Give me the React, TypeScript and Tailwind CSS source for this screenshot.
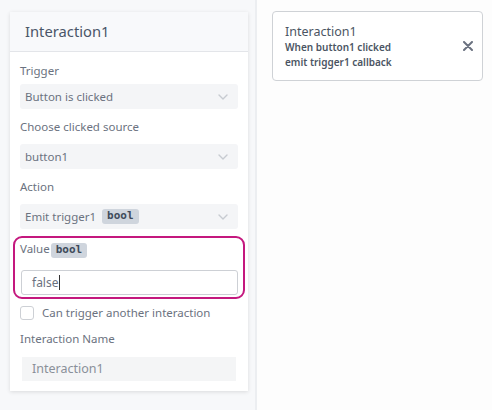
import React from "react";

const font = { fontFamily: '"Noto Sans", "Open Sans", sans-serif' };

function Chevron() {
  return (
    <svg width="10" height="6" viewBox="0 0 10 6" className="shrink-0">
      <path d="M1 1 L5 5 L9 1" fill="none" stroke="#c7cbd1" strokeWidth="1.4" strokeLinecap="round" strokeLinejoin="round" />
    </svg>
  );
}

function Badge({ children }: { children: React.ReactNode }) {
  return (
    <span
      className="inline-flex items-center h-[15px] px-[5px] rounded-[3px] bg-[#cfd5dd] text-[11px] font-bold text-[#3f4b5b]"
      style={{ fontFamily: '"DejaVu Sans Mono", "Liberation Mono", monospace' }}
    >
      {children}
    </span>
  );
}

function Select({ children }: { children: React.ReactNode }) {
  return (
    <div className="flex items-center justify-between h-[25px] bg-[#f4f5f7] rounded-[3px] pl-[5px] pr-[10px] text-[11.5px] text-[#6b7280]">
      <div className="flex items-center gap-[6px]">{children}</div>
      <Chevron />
    </div>
  );
}

export default function App() {
  return (
    <div className="flex w-[492px] h-[410px] overflow-hidden bg-[#fdfdfd]" style={font}>
      <div className="w-[257px] h-full bg-[#f7f8fa] border-r-2 border-[#eceef1] pt-[12px] pl-[10px] shrink-0">
        <div className="w-[238px] h-[379px] bg-white shadow-[0_1px_4px_rgba(0,0,0,0.12)]">
          <div className="h-[40px] flex items-center px-[15px] bg-[#f8f9fb] border-b border-[#e3e5e9] text-[14.75px] text-[#4a5568]">
            Interaction1
          </div>
          <div className="px-[10px]">
            <div className="text-[11.5px] text-[#6b7280] leading-[18px] mt-[10px]">Trigger</div>
            <div className="mt-[4px]">
              <Select>Button is clicked</Select>
            </div>
            <div className="text-[11.5px] text-[#6b7280] leading-[18px] mt-[9px]">Choose clicked source</div>
            <div className="mt-[8px]">
              <Select>button1</Select>
            </div>
            <div className="text-[11.5px] text-[#6b7280] leading-[18px] mt-[9px]">Action</div>
            <div className="mt-[8px]">
              <Select>
                <span>Emit trigger1</span>
                <Badge>bool</Badge>
              </Select>
            </div>
            <div className="-mx-[7px] mt-[7px] h-[63px] border-2 border-[#c4187e] rounded-[9px] px-[5px] pt-[2px]">
              <div className="flex items-center text-[11.5px] text-[#6b7280] leading-[18px]">
                <span>Value</span>
                <span className="ml-[1px]">
                  <Badge>bool</Badge>
                </span>
              </div>
              <div className="mt-[12px] ml-[1px] h-[25px] border border-[#cdd0d5] rounded-[3px] flex items-center pl-[10px] text-[12px] text-[#6b7280]">
                false<span className="inline-block w-px h-[15px] bg-[#333] ml-[1px]" />
              </div>
            </div>
            <div className="flex items-center mt-[6px] h-[15px]">
              <div className="w-[14px] h-[14px] border border-[#cdd0d5] rounded-[3px] bg-white" />
              <span className="ml-[8px] text-[11.5px] text-[#6b7280]">Can trigger another interaction</span>
            </div>
            <div className="text-[11.5px] text-[#6b7280] leading-[18px] mt-[10px]">Interaction Name</div>
            <div className="mt-[9px] mx-[2px] h-[24px] bg-[#f4f5f6] flex items-center pl-[10px] text-[12.5px] text-[#8a9099]">
              Interaction1
            </div>
          </div>
        </div>
      </div>
      <div className="flex-1 pt-[11px] pl-[15px]">
        <div className="w-[211px] h-[70px] border border-[#cfd2d6] rounded-[4px] bg-white flex items-center justify-between pl-[12px] pr-[9px]">
          <div className="flex flex-col">
            <span className="text-[12.5px] leading-[17px] text-[#4b5563]">Interaction1</span>
            <span className="text-[10px] leading-[15px] text-[#4b5563] font-semibold">When button1 clicked</span>
            <span className="text-[10px] leading-[15px] text-[#4b5563] font-semibold">emit trigger1 callback</span>
          </div>
          <svg width="10" height="10" viewBox="0 0 10 10">
            <path d="M1 1 L9 9 M9 1 L1 9" stroke="#6b7280" strokeWidth="2" strokeLinecap="round" />
          </svg>
        </div>
      </div>
    </div>
  );
}
